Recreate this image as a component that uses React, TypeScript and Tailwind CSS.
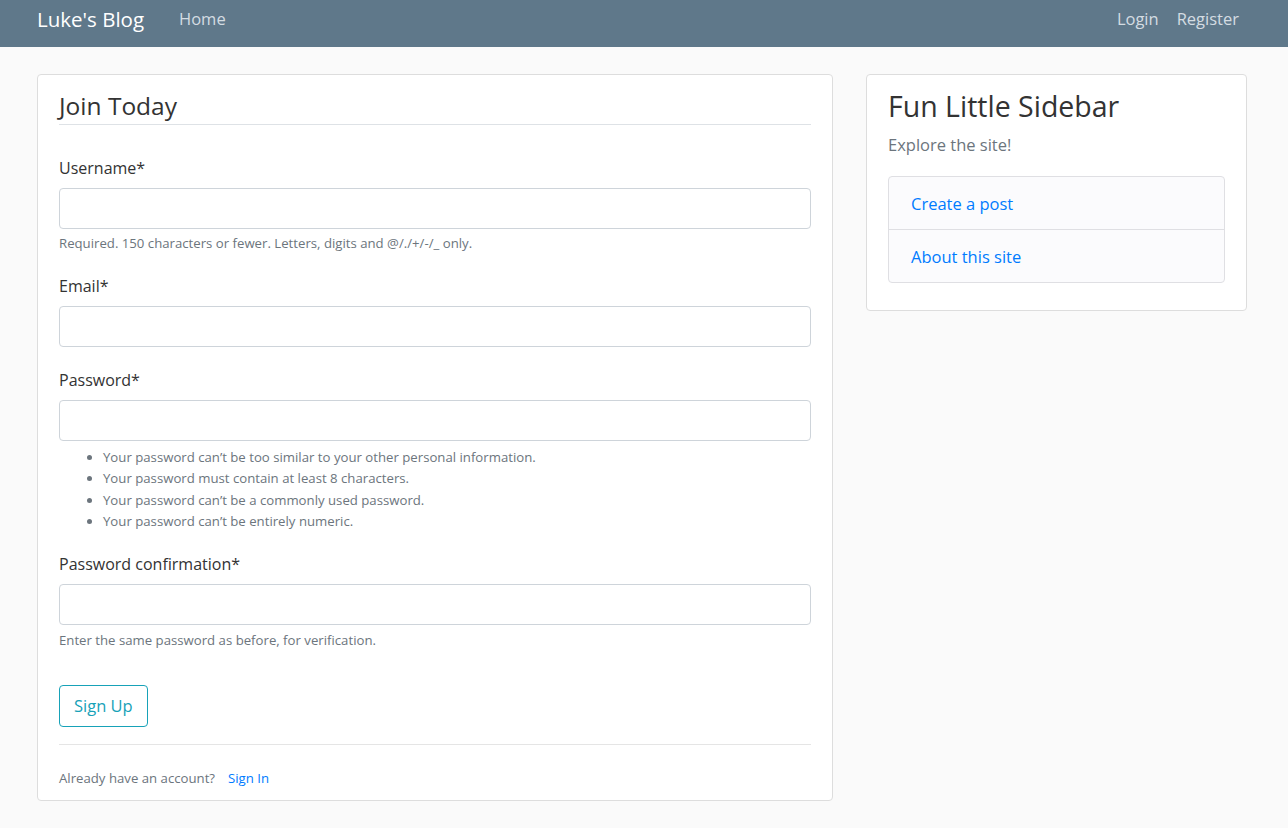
import React from 'react';

const font = { fontFamily: '"Open Sans", "Noto Sans", sans-serif' };

const Field: React.FC<{ label: string; help?: React.ReactNode; top: string }> = ({ label, help, top }) => (
  <div className={top}>
    <label className="block text-[16px] leading-[24px] text-[#333] mb-[8px]">{label}</label>
    <input className="block w-full h-[41px] rounded-[4px] border border-[#ced4da] bg-white" />
    {help}
  </div>
);

const passwordRules = [
  "Your password can\u2019t be too similar to your other personal information.",
  'Your password must contain at least 8 characters.',
  "Your password can\u2019t be a commonly used password.",
  "Your password can\u2019t be entirely numeric.",
];

export default function App() {
  return (
    <div className="min-h-[828px] bg-[#fafafa]" style={font}>
      <nav className="h-[47px] bg-[#5f788a] flex items-center px-[37px]">
        <a className="text-white text-[20.5px] leading-[30px] mr-[35px] -mt-[9px]">Luke's Blog</a>
        <a className="text-[#d4dce2] text-[16.5px] leading-[24px] -mt-[9px]">Home</a>
        <div className="ml-auto flex gap-[18px] pr-[12px] -mt-[9px]">
          <a className="text-[#d4dce2] text-[16.5px] leading-[24px]">Login</a>
          <a className="text-[#d4dce2] text-[16.5px] leading-[24px]">Register</a>
        </div>
      </nav>

      <div className="flex items-start gap-[33px] pl-[37px] pt-[27px]">
        <main className="w-[796px] bg-white border border-[#dddddd] rounded-[4px] px-[21px] pt-[13px] pb-[12px]">
          <div className="text-[24.5px] leading-[36px] text-[#333] border-b border-[#dee2e6]">Join Today</div>

          <Field
            label="Username*"
            top="mt-[31px]"
            help={
              <p className="mt-[4px] text-[13.2px] leading-[20px] text-[#6c757d]">
                Required. 150 characters or fewer. Letters, digits and @/./+/-/_ only.
              </p>
            }
          />
          <Field label="Email*" top="mt-[21px]" />
          <Field
            label="Password*"
            top="mt-[21px]"
            help={
              <ul className="mt-[6px] pl-[44px] list-disc text-[13.2px] leading-[21.4px] text-[#6c757d]">
                {passwordRules.map((r) => (
                  <li key={r}>{r}</li>
                ))}
              </ul>
            }
          />
          <Field
            label="Password confirmation*"
            top="mt-[19px]"
            help={
              <p className="mt-[5px] text-[13.2px] leading-[20px] text-[#6c757d]">
                Enter the same password as before, for verification.
              </p>
            }
          />

          <button className="mt-[35px] h-[42px] px-[14px] rounded-[4px] border border-[#17a2b8] text-[#17a2b8] text-[16.5px] leading-[24px]">
            Sign Up
          </button>

          <div className="mt-[17px] pt-[23px] border-t border-[#e5e5e5]">
            <p className="text-[13.2px] leading-[20px] text-[#6c757d]">
              Already have an account?
              <a className="ml-[13px] text-[#007bff]">Sign In</a>
            </p>
          </div>
        </main>

        <aside className="w-[381px] bg-white border border-[#dddddd] rounded-[4px] px-[21px] pt-[11px] pb-[27px]">
          <h3 className="text-[28.5px] leading-[40px] text-[#333]">Fun Little Sidebar</h3>
          <p className="mt-[7px] text-[16.5px] leading-[24px] text-[#6c757d]">Explore the site!</p>
          <ul className="mt-[19px] border border-[#dfdfe3] rounded-[4px] bg-[#fbfbfd]">
            <li className="px-[22px] pt-[15px] pb-[13px] text-[16.5px] leading-[24px] text-[#007bff] border-b border-[#dfdfe3]">
              Create a post
            </li>
            <li className="px-[22px] pt-[15px] pb-[13px] text-[16.5px] leading-[24px] text-[#007bff]">About this site</li>
          </ul>
        </aside>
      </div>
    </div>
  );
}
